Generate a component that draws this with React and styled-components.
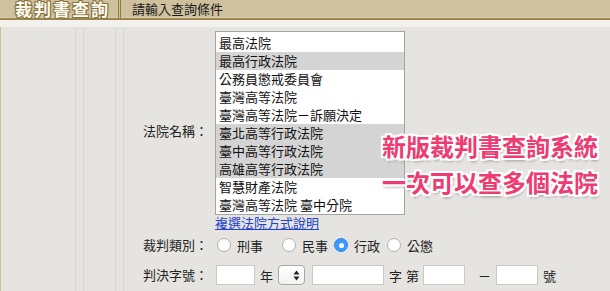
import styled, { createGlobalStyle } from 'styled-components';

const GlobalStyle = createGlobalStyle`
  html, body {
    margin: 0;
    padding: 0;
    background: #e5e4e0;
  }
  body {
    font-family: "Noto Sans CJK TC", "Noto Sans", sans-serif;
    font-size: 13px;
    color: #222;
  }
`

const Page = styled.div`
  position: relative;
  width: 610px;
  height: 291px;
  overflow: hidden;
  display: flex;
  flex-direction: column;
`

const Header = styled.div`
  display: flex;
  align-items: stretch;
  height: 18px;
  background: #cfc19e;
  border-bottom: 2px solid #9c8450;
  box-shadow: inset 0 -1px 0 #dcd0b2;
`

const TitleCell = styled.div`
  width: 119px;
  box-sizing: border-box;
  padding-left: 15px;
  border-right: 1px solid #8f7a45;
  font-size: 17px;
  line-height: 18px;
  font-weight: 700;
  letter-spacing: 2px;
  white-space: nowrap;
  color: #fffdf2;
  text-shadow: 1px 0 0 #8a7240, -1px 0 0 #8a7240, 0 1px 0 #8a7240, 0 -1px 0 #8a7240,
    1px 1px 0 #8a7240, -1px -1px 0 #8a7240, 1px -1px 0 #8a7240, -1px 1px 0 #8a7240;
`

const SubCell = styled.div`
  margin-left: 1px;
  border-left: 1px solid #8f7a45;
  padding-left: 11px;
  font-size: 13px;
  line-height: 18px;
  color: #1a1a1a;
`

const Band = styled.div`
  height: 7px;
  background: #f2f1ec;
`

const Body = styled.div`
  flex: 1;
  display: flex;
`

const Gutter = styled.div`
  width: ${props => props.width}px;
  border-right: 1px solid #d8d6d1;
  border-left: ${props => props.first ? '1px solid #cdbf9c' : 'none'};
`

const Form = styled.div`
  flex: 1;
  display: grid;
  grid-template-columns: 91px 1fr;
  grid-auto-rows: min-content;
  padding-top: 4px;
`

const Label = styled.div`
  text-align: right;
  padding-right: 7px;
  align-self: center;
  white-space: nowrap;
  line-height: ${props => props.height || 30}px;
`

const Field = styled.div`
  display: flex;
  flex-direction: ${props => props.column ? 'column' : 'row'};
  align-items: ${props => props.column ? 'flex-start' : 'center'};
  height: ${props => props.height ? props.height + 'px' : 'auto'};
`

const ListBox = styled.div`
  width: 190px;
  height: 184px;
  box-sizing: border-box;
  border: 1px solid #a3a3a3;
  background: #fff;
  padding-top: 2px;
  overflow: hidden;
`

const Option = styled.div`
  height: 18px;
  line-height: 18px;
  padding-left: 3px;
  white-space: nowrap;
  background: ${props => props.selected ? '#d4d4d4' : 'transparent'};
  color: #111;
`

const HelpLink = styled.a`
  color: #2340cf;
  text-decoration: underline;
  line-height: 15px;
`

const RadioItem = styled.label`
  display: flex;
  align-items: center;
  margin-left: ${props => props.offset}px;
`

const RadioDot = styled.span`
  width: 14px;
  height: 14px;
  box-sizing: border-box;
  border-radius: 50%;
  margin-right: 6px;
  background: ${props => props.checked ? '#3b99fc' : '#fff'};
  border: 1px solid ${props => props.checked ? '#2f86e6' : '#b0b0b0'};
  display: flex;
  align-items: center;
  justify-content: center;
  &::after {
    content: '';
    width: 5px;
    height: 5px;
    border-radius: 50%;
    background: #fff;
    display: ${props => props.checked ? 'block' : 'none'};
  }
`

const TextBox = styled.span`
  display: inline-block;
  width: ${props => props.width}px;
  height: 20px;
  box-sizing: border-box;
  border: 1px solid #c9c9c9;
  background: #fff;
  margin-left: ${props => props.offset || 0}px;
`

const Word = styled.span`
  margin-left: ${props => props.offset}px;
`

const Stepper = styled.span`
  width: 27px;
  height: 20px;
  box-sizing: border-box;
  margin-left: 5px;
  border: 1px solid #a9a9a9;
  border-radius: 4px;
  background: linear-gradient(#ffffff, #f2f2f2);
  display: flex;
  align-items: center;
  justify-content: flex-end;
  padding-right: 4px;
`

const Overlay = styled.div`
  position: absolute;
  left: 382px;
  top: 128px;
  font-size: 24px;
  line-height: 36px;
  font-weight: 700;
  color: #ee3c72;
  white-space: nowrap;
  text-shadow: 2px 0 0 #fff, -2px 0 0 #fff, 0 2px 0 #fff, 0 -2px 0 #fff,
    2px 2px 0 #fff, -2px -2px 0 #fff, 2px -2px 0 #fff, -2px 2px 0 #fff,
    1px 3px 3px rgba(0, 0, 0, 0.35);
`

const courts = [
    {name: '最高法院'},
    {name: '最高行政法院', selected: true},
    {name: '公務員懲戒委員會'},
    {name: '臺灣高等法院'},
    {name: '臺灣高等法院－訴願決定'},
    {name: '臺北高等行政法院', selected: true},
    {name: '臺中高等行政法院', selected: true},
    {name: '高雄高等行政法院', selected: true},
    {name: '智慧財產法院'},
    {name: '臺灣高等法院 臺中分院'},
]

const kinds = [
    {name: '刑事', offset: 2},
    {name: '民事', offset: 19},
    {name: '行政', offset: 6, checked: true},
    {name: '公懲', offset: 7},
]

function ArrowsIcon() {
    return (
        <svg width="7" height="11" viewBox="0 0 7 11">
            <path d="M3.5 0.5 L6.5 4.5 L0.5 4.5 Z" fill="#222"/>
            <path d="M3.5 10.5 L6.5 6.5 L0.5 6.5 Z" fill="#222"/>
        </svg>
    )
}

function App() {
    return (
        <Page>
            <GlobalStyle/>
            <Header>
                <TitleCell>裁判書查詢</TitleCell>
                <SubCell>請輸入查詢條件</SubCell>
            </Header>
            <Band/>
            <Body>
                <Gutter width={74} first/>
                <Gutter width={7}/>
                <Gutter width={31}/>
                <Gutter width={7}/>
                <Form>
                    <Label height={199}>法院名稱：</Label>
                    <Field column>
                        <ListBox>
                            {courts.map(c => (
                                <Option key={c.name} selected={c.selected}>{c.name}</Option>
                            ))}
                        </ListBox>
                        <HelpLink href="#">複選法院方式說明</HelpLink>
                    </Field>

                    <Label>裁判類別：</Label>
                    <Field height={30}>
                        {kinds.map(k => (
                            <RadioItem key={k.name} offset={k.offset}>
                                <RadioDot checked={k.checked}/>
                                {k.name}
                            </RadioItem>
                        ))}
                    </Field>

                    <Label>判決字號：</Label>
                    <Field height={30}>
                        <TextBox width={39} offset={1}/>
                        <Word offset={5}>年</Word>
                        <Stepper><ArrowsIcon/></Stepper>
                        <TextBox width={72} offset={7}/>
                        <Word offset={5}>字</Word>
                        <Word offset={4}>第</Word>
                        <TextBox width={42} offset={4}/>
                        <Word offset={13}>－</Word>
                        <TextBox width={42} offset={5}/>
                        <Word offset={5}>號</Word>
                    </Field>
                </Form>
            </Body>
            <Overlay>
                <div>新版裁判書查詢系統</div>
                <div>一次可以查多個法院</div>
            </Overlay>
        </Page>
    );
}

export default App;
